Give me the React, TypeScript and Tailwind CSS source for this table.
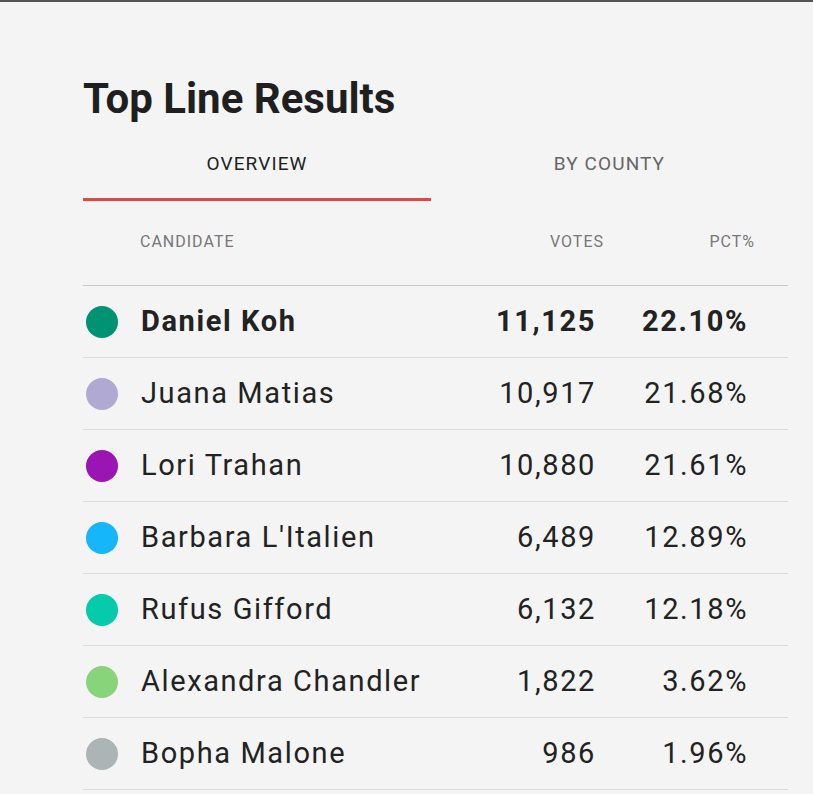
const candidates = [
  { name: 'Daniel Koh', votes: '11,125', pct: '22.10%', color: 'bg-[#009373]', lead: true },
  { name: 'Juana Matias', votes: '10,917', pct: '21.68%', color: 'bg-[#b0a9d4]' },
  { name: 'Lori Trahan', votes: '10,880', pct: '21.61%', color: 'bg-[#9b14b4]' },
  { name: "Barbara L'Italien", votes: '6,489', pct: '12.89%', color: 'bg-[#16b6fb]' },
  { name: 'Rufus Gifford', votes: '6,132', pct: '12.18%', color: 'bg-[#04cba9]' },
  { name: 'Alexandra Chandler', votes: '1,822', pct: '3.62%', color: 'bg-[#88d47b]' },
  { name: 'Bopha Malone', votes: '986', pct: '1.96%', color: 'bg-[#abb5b6]' },
];

export default function App() {
  return (
    <div className="min-h-screen bg-[#f4f4f4] border-t-2 border-[#555] font-['Roboto','Liberation_Sans',sans-serif] text-[#222]">
      <div className="pl-[83px] pt-[72px]">
        <h1 className="text-[42px] leading-[50px] font-bold text-[#1f1f1f]">Top Line Results</h1>

        <div className="flex w-[705px] pt-[28px] text-[19px] leading-6 tracking-[1.1px]">
          <div className="w-[348px] text-center pb-[22px] border-b-[3px] border-[#e24a3b] text-[#222]">
            OVERVIEW
          </div>
          <div className="flex-1 text-center pb-[22px] border-b-[3px] border-transparent text-[#666]">
            BY COUNTY
          </div>
        </div>

        <div className="w-[705px]">
          <div className="flex pl-[57px] pt-[31px] pb-[33px] text-[16px] leading-5 tracking-[1px] text-[#777] border-b border-[#c8c8c8]">
            <div className="flex-1">CANDIDATE</div>
            <div className="w-[150px] text-right">VOTES</div>
            <div className="w-[151px] text-right">PCT%</div>
            <div className="w-[33px]" />
          </div>

          {candidates.map((c) => (
            <div key={c.name} className="flex items-center h-[72px] border-b border-[#dcdcdc] text-[29px] tracking-[1.6px]">
              <div className={`ml-[3px] w-8 h-8 rounded-full ${c.color}`} />
              <div className={`flex-1 ml-[23px] ${c.lead ? 'font-bold' : ''}`}>{c.name}</div>
              <div className={`w-[150px] text-right ${c.lead ? 'font-bold' : ''}`}>{c.votes}</div>
              <div className={`w-[152px] text-right ${c.lead ? 'font-bold' : ''}`}>{c.pct}</div>
              <div className="w-[40px]" />
            </div>
          ))}
        </div>
      </div>
    </div>
  );
}
